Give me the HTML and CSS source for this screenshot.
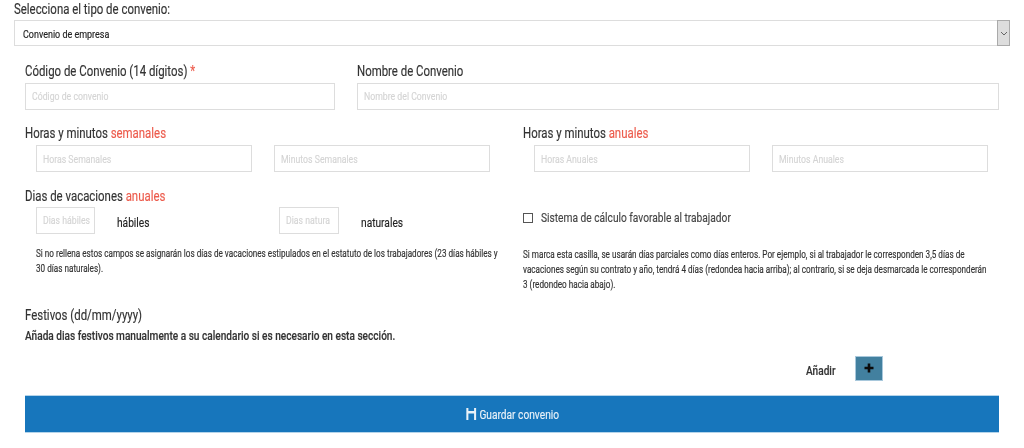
FILE: index.html
```html
<!DOCTYPE html>
<html lang="es">
<head>
<meta charset="utf-8">
<title>Convenio</title>
<link rel="stylesheet" href="styles.css">
</head>
<body>
<form class="page">
  <div class="title"><span class="sq">Selecciona el tipo de convenio:</span></div>
  <div class="select"><span class="sq">Convenio de empresa</span><span class="select-arrow"><svg width="8" height="5" viewBox="0 0 8 5"><path d="M1 1l3 3 3-3" fill="none" stroke="#666" stroke-width="1"/></svg></span></div>

  <div class="section">
    <div class="row-code">
      <div class="code-col">
        <div class="label"><span class="sq">Código de Convenio (14 dígitos) <span class="req">*</span></span></div>
        <div class="input"><span class="sq">Código de convenio</span></div>
      </div>
      <div class="name-col">
        <div class="label"><span class="sq">Nombre de Convenio</span></div>
        <div class="input"><span class="sq">Nombre del Convenio</span></div>
      </div>
    </div>

    <div class="row-hours">
      <div class="half">
        <div class="label"><span class="sq">Horas y minutos <span class="hl">semanales</span></span></div>
        <div class="pair">
          <div class="input"><span class="sq">Horas Semanales</span></div>
          <div class="input"><span class="sq">Minutos Semanales</span></div>
        </div>
      </div>
      <div class="half">
        <div class="label"><span class="sq">Horas y minutos <span class="hl">anuales</span></span></div>
        <div class="pair">
          <div class="input"><span class="sq">Horas Anuales</span></div>
          <div class="input"><span class="sq">Minutos Anuales</span></div>
        </div>
      </div>
    </div>

    <div class="row-days">
      <div class="half">
        <div class="label"><span class="sq">Dias de vacaciones <span class="hl">anuales</span></span></div>
        <div class="days">
          <div class="input small-a"><span class="sq">Dias hábiles</span></div><span class="unit unit-a"><span class="sq">hábiles</span></span>
          <div class="input small-b"><span class="sq">Dias natura</span></div><span class="unit"><span class="sq">naturales</span></span>
        </div>
        <p class="note note-left">Si no rellena estos campos se asignarán los días de vacaciones estipulados en el estatuto de los trabajadores (23 días hábiles y 30 días naturales).</p>
      </div>
      <div class="half">
        <div class="check"><span class="box"></span><span class="sq">Sistema de cálculo favorable al trabajador</span></div>
        <p class="note note-right">Si marca esta casilla, se usarán días parciales como días enteros. Por ejemplo, si al trabajador le corresponden 3,5 días de vacaciones según su contrato y año, tendrá 4 días (redondea hacia arriba); al contrario, si se deja desmarcada le corresponderán 3 (redondeo hacia abajo).</p>
      </div>
    </div>

    <div class="label festivos"><span class="sq">Festivos (dd/mm/yyyy)</span></div>
    <div class="festivos-text"><span class="sq">Añada dias festivos manualmente a su calendario si es necesario en esta sección.</span></div>

    <div class="add-row"><span class="add-text"><span class="sq">Añadir</span></span><span class="add-btn"><svg width="10" height="10" viewBox="0 0 10 10"><path d="M5 .5v9M.5 5h9" stroke="#0b0b0b" stroke-width="2.6" fill="none"/></svg></span></div>

    <div class="save"><span class="save-inner"><svg width="16" height="12" viewBox="0 0 12 12"><path d="M0 0h2.5v3h7V0H12v12H9.5V5.5h-7V12H0z" fill="#e8f1f8"/></svg><span>Guardar convenio</span></span></div>
  </div>
</form>
</body>
</html>
```
FILE: styles.css
```css
* { box-sizing: border-box; }
html, body { margin: 0; background: #fff; }
body { font-family: Roboto, "Liberation Sans", sans-serif; color: #333; font-size: 14px; height: 448px; overflow: hidden; -webkit-text-stroke: .15px currentColor; }
.page { padding: 0 14px; display: block; filter: blur(.4px); }
.sq { display: inline-block; white-space: nowrap; transform: scaleX(.815); transform-origin: 0 50%; }
.title { height: 20px; padding-top: 2px; line-height: 15px; font-size: 14px; color: #333; }
.select { height: 26px; border: 1px solid #ddd; display: flex; align-items: center; justify-content: space-between; padding-left: 8px; font-size: 11px; color: #222; }
.select .sq { position: relative; top: 1px; }
.select-arrow { width: 13px; height: 26px; margin: -1px -1px -1px 0; background: #ddd; border: 1px solid #aaa; display: flex; align-items: center; justify-content: center; }
.section { padding: 0 11px; }
.label { font-size: 14px; line-height: 17px; color: #333; }
.req, .hl { color: #ec5b4c; }
.input { height: 27px; border: 1px solid #ddd; padding-left: 6px; line-height: 25px; font-size: 10.7px; color: #d4d4d4; background: #fff; overflow: hidden; white-space: nowrap; }
.row-code { display: grid; grid-template-columns: 310px 642px; column-gap: 22px; padding-top: 17px; }
.row-code .label { margin-bottom: 3px; }
.row-hours, .row-days { display: grid; grid-template-columns: 498px 476px; }
.row-hours { padding-top: 15px; }
.row-hours .label { margin-bottom: 3px; }
.pair { display: grid; grid-template-columns: 216px 216px; column-gap: 22px; padding-left: 11px; }
.pair .input { line-height: 27px; }
.row-days { padding-top: 16px; }
.row-days .label { margin-bottom: 2px; }
.days { display: flex; align-items: center; padding-left: 11px; }
.small-a { width: 59px; }
.small-b { width: 60px; }
.unit { font-size: 12.5px; color: #222; margin-left: 22px; padding-top: 3px; }
.unit-a { width: 162px; }
.note { font-size: 10px; line-height: 15px; color: #333; transform: scaleX(.815); transform-origin: 0 0; }
.note-left { margin: 12px 0 0 11px; width: 570px; }
.note-right { margin: 21px 0 0; width: 576px; }
.check { display: flex; align-items: center; gap: 8px; font-size: 12.5px; color: #444; padding-top: 22px; line-height: 16px; }
.box { width: 10px; height: 10px; border: 1px solid #555; background: #fff; }
.festivos { margin-top: 15px; }
.festivos-text { font-size: 12.4px; line-height: 16px; color: #333; margin-top: 4px; font-weight: 500; }
.add-row { display: flex; justify-content: flex-end; align-items: center; padding-right: 116px; margin-top: 12px; }
.add-text { font-size: 12.4px; color: #333; width: 49px; font-weight: 500; padding-top: 3px; }
.add-btn { width: 28px; height: 25px; padding-bottom: 1px; background: #42809f; border: 1px solid #a8c8dc; display: flex; align-items: center; justify-content: center; }
.save { margin-top: 14px; height: 38px; background: #1776bc; border: 1px solid #b4d4ea; border-width: 1px 0; display: flex; align-items: center; justify-content: center; color: #e8f1f8; font-size: 12.5px; }
.save-inner { display: flex; align-items: center; gap: 2px; white-space: nowrap; transform: scaleX(.815); }
```
